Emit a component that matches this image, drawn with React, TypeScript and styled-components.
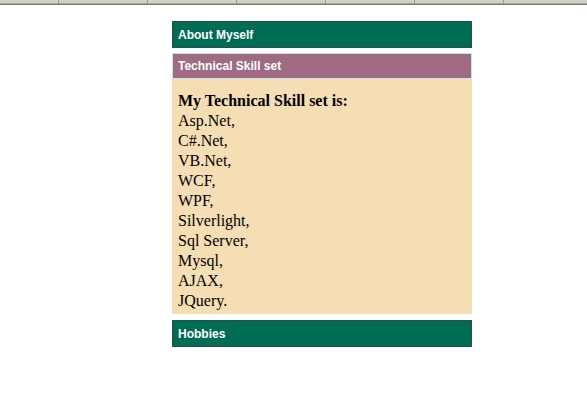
import React from "react";
import styled, { createGlobalStyle } from "styled-components";

const Global = createGlobalStyle`
  html, body { margin: 0; padding: 0; background: #ffffff; }
  body { font-family: "Liberation Serif", "Times New Roman", serif; }
`;

const TopStrip = styled.div`
  display: grid;
  grid-template-columns: 59px 89px 89px 89px 89px 89px 89px 1fr;
  height: 4px;
  border-bottom: 1px solid #7c7c7c;
  background: #d4d0c8;
`;

const StripCell = styled.div`
  border-right: 1px solid #9a9890;
  border-bottom: 1px solid #a8a59e;
`;

const Page = styled.div`
  display: flex;
  justify-content: flex-start;
  padding: 16px 0 0 172px;
`;

const Column = styled.div`
  width: 300px;
  display: flex;
  flex-direction: column;
`;

const Header = styled.div<{ $variant: "green" | "mauve" }>`
  box-sizing: border-box;
  height: ${(p) => (p.$variant === "green" ? "27px" : "26px")};
  display: flex;
  align-items: center;
  padding-left: 5px;
  background: ${(p) => (p.$variant === "green" ? "#006c53" : "#9e6b83")};
  border: 1px solid ${(p) => (p.$variant === "green" ? "#2b4f46" : "#c4e2ef")};
  color: #ffffff;
  font-family: "Liberation Sans", Arial, sans-serif;
  font-weight: bold;
  font-size: 12px;
  margin-top: ${(p) => (p.$variant === "green" ? "0" : "5px")};
`;

const Body = styled.div`
  background: #f5deb3;
  padding: 12px 6px 3px 6px;
  color: #000000;
  font-size: 16px;
  line-height: 20px;
  margin-bottom: 6px;
`;

const Title = styled.div`
  font-weight: bold;
  font-size: 16px;
  line-height: 20px;
`;

const Item = styled.div``;

const skills = [
  "Asp.Net,",
  "C#.Net,",
  "VB.Net,",
  "WCF,",
  "WPF,",
  "Silverlight,",
  "Sql Server,",
  "Mysql,",
  "AJAX,",
  "JQuery.",
];

export default function App() {
  return (
    <>
      <Global />
      <TopStrip>
        {Array.from({ length: 8 }).map((_, i) => (
          <StripCell key={i} />
        ))}
      </TopStrip>
      <Page>
        <Column>
          <Header $variant="green">About Myself</Header>
          <Header $variant="mauve">Technical Skill set</Header>
          <Body>
            <Title>My Technical Skill set is:</Title>
            {skills.map((s) => (
              <Item key={s}>{s}</Item>
            ))}
          </Body>
          <Header $variant="green">Hobbies</Header>
        </Column>
      </Page>
    </>
  );
}
